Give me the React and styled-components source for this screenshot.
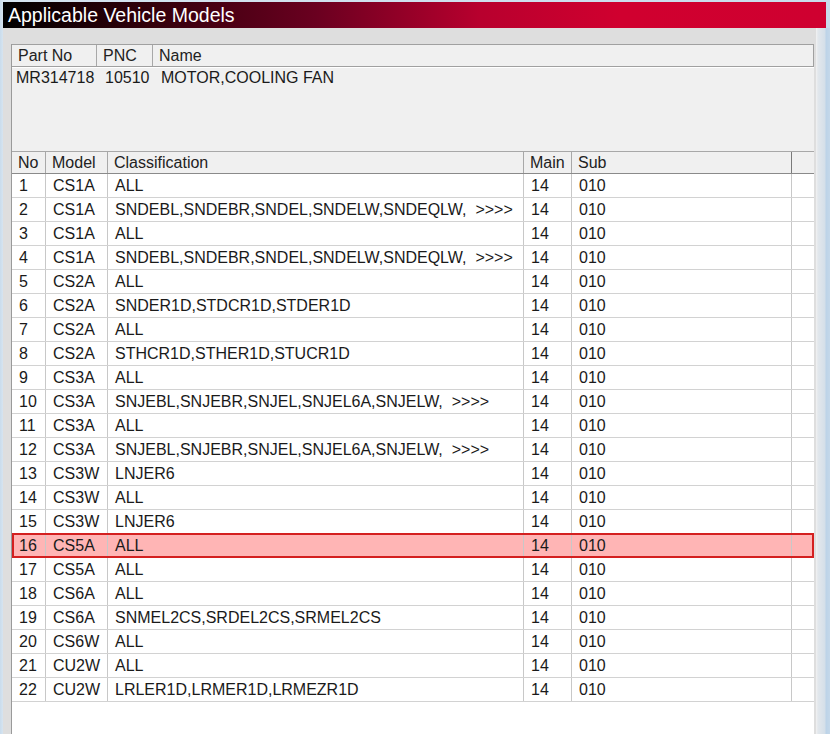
import React from "react";
import styled, { createGlobalStyle } from "styled-components";

const rows = [
  ["1", "CS1A", "ALL"],
  ["2", "CS1A", "SNDEBL,SNDEBR,SNDEL,SNDELW,SNDEQLW,  >>>>"],
  ["3", "CS1A", "ALL"],
  ["4", "CS1A", "SNDEBL,SNDEBR,SNDEL,SNDELW,SNDEQLW,  >>>>"],
  ["5", "CS2A", "ALL"],
  ["6", "CS2A", "SNDER1D,STDCR1D,STDER1D"],
  ["7", "CS2A", "ALL"],
  ["8", "CS2A", "STHCR1D,STHER1D,STUCR1D"],
  ["9", "CS3A", "ALL"],
  ["10", "CS3A", "SNJEBL,SNJEBR,SNJEL,SNJEL6A,SNJELW,  >>>>"],
  ["11", "CS3A", "ALL"],
  ["12", "CS3A", "SNJEBL,SNJEBR,SNJEL,SNJEL6A,SNJELW,  >>>>"],
  ["13", "CS3W", "LNJER6"],
  ["14", "CS3W", "ALL"],
  ["15", "CS3W", "LNJER6"],
  ["16", "CS5A", "ALL"],
  ["17", "CS5A", "ALL"],
  ["18", "CS6A", "ALL"],
  ["19", "CS6A", "SNMEL2CS,SRDEL2CS,SRMEL2CS"],
  ["20", "CS6W", "ALL"],
  ["21", "CU2W", "ALL"],
  ["22", "CU2W", "LRLER1D,LRMER1D,LRMEZR1D"],
];

const GlobalStyle = createGlobalStyle`
  html, body {
    margin: 0;
    padding: 0;
    background: #c4d8ea;
  }
  body {
    font-family: "Liberation Sans", Arial, sans-serif;
  }
`;

const Window = styled.div`
  width: 830px;
  height: 734px;
  display: flex;
  flex-direction: column;
  padding-top: 2px;
  box-sizing: border-box;
  background: linear-gradient(to right, #c9dcec 0, #d6e4f0 3px, #c9dcec 100%);
  overflow: hidden;
`;

const TitleBar = styled.div`
  height: 26px;
  margin: 0 4px 0 3px;
  padding-left: 5px;
  display: flex;
  align-items: center;
  color: #ffffff;
  font-size: 19.5px;
  background: linear-gradient(
    to right,
    #000000 0%,
    #2a0008 15%,
    #6a0020 38%,
    #b8002e 58%,
    #d0002f 75%,
    #cf0030 100%
  );
`;

const Body = styled.div`
  flex: 1;
  display: flex;
  min-height: 0;
`;

const Panel = styled.div`
  flex: 1;
  margin-left: 3px;
  padding: 16px 2px 0 8px;
  background: #dedede;
  display: flex;
  flex-direction: column;
  min-height: 0;
`;

const SideStrip = styled.div`
  width: 14px;
  background: linear-gradient(to right, #f2f2f2 0, #e2e7ec 2px, #d4dfe9 9px, #bcd3e8 10px, #c4d8ea 100%);
`;

const Content = styled.div`
  flex: 1;
  display: flex;
  flex-direction: column;
  border-left: 1px solid #9a9a9a;
  background: #f0f0f0;
  min-height: 0;
`;

const InfoBox = styled.div`
  height: 107px;
  display: flex;
  flex-direction: column;
  background: #f0f0f0;
`;

const InfoHeader = styled.div`
  display: grid;
  grid-template-columns: 85px 56px 1fr;
  height: 21px;
  border-top: 1px solid #a0a0a0;
  border-right: 1px solid #a0a0a0;
  border-bottom: 1px solid #a0a0a0;
  box-shadow: 0 1px 0 #ffffff;
`;

const InfoHeadCell = styled.div`
  display: flex;
  align-items: center;
  padding-left: 6px;
  font-size: 16px;
  color: #222;
  border-right: ${(p) => (p.$last ? "none" : "1px solid #a8a8a8")};
`;

const InfoRow = styled.div`
  display: grid;
  grid-template-columns: 85px 56px 1fr;
  height: 22px;
  align-items: center;
`;

const InfoCell = styled.div`
  padding-left: ${(p) => p.$pad}px;
  font-size: 16px;
  color: #1a1a1a;
  white-space: nowrap;
`;

const Grid = styled.div`
  flex: 1;
  display: flex;
  flex-direction: column;
  background: #ffffff;
  min-height: 0;
`;

const cols = "34px 62px 416px 48px 220px 1fr";

const HeadRow = styled.div`
  display: grid;
  grid-template-columns: ${cols};
  height: 21px;
  background: #f0f0f0;
  border-top: 1px solid #a8a8a8;
  border-bottom: 1px solid #8a8a8a;
  flex-shrink: 0;
`;

const HeadCell = styled.div`
  display: flex;
  align-items: center;
  padding-left: 6px;
  font-size: 16px;
  color: #222;
  border-right: 1px solid ${(p) => (p.$dark ? "#7a7a7a" : "#a8a8a8")};
  ${(p) => (p.$last ? "border-right: none;" : "")}
`;

const Row = styled.div`
  display: grid;
  grid-template-columns: ${cols};
  height: 24px;
  box-sizing: border-box;
  flex-shrink: 0;
  position: relative;
  background: ${(p) => (p.$selected ? "#ffb5b5" : "#ffffff")};
  border-bottom: 1px solid #d2d2d2;
`;

const SelectFrame = styled.div`
  position: absolute;
  left: 0;
  right: 0;
  top: -1px;
  bottom: -1px;
  border: 2px solid #d42020;
  pointer-events: none;
`;

const Cell = styled.div`
  display: flex;
  align-items: center;
  padding-left: 7px;
  font-size: 16px;
  color: #1a1a1a;
  white-space: pre;
  overflow: hidden;
  border-right: ${(p) => (p.$last ? "none" : "1px solid #c8c8c8")};
`;

const App = () => {
  return (
    <>
      <GlobalStyle />
      <Window>
        <TitleBar>Applicable Vehicle Models</TitleBar>
        <Body>
          <Panel>
            <Content>
              <InfoBox>
                <InfoHeader>
                  <InfoHeadCell>Part No</InfoHeadCell>
                  <InfoHeadCell>PNC</InfoHeadCell>
                  <InfoHeadCell $last>Name</InfoHeadCell>
                </InfoHeader>
                <InfoRow>
                  <InfoCell $pad={4}>MR314718</InfoCell>
                  <InfoCell $pad={8}>10510</InfoCell>
                  <InfoCell $pad={8}>MOTOR,COOLING FAN</InfoCell>
                </InfoRow>
              </InfoBox>
              <Grid>
                <HeadRow>
                  <HeadCell>No</HeadCell>
                  <HeadCell>Model</HeadCell>
                  <HeadCell>Classification</HeadCell>
                  <HeadCell>Main</HeadCell>
                  <HeadCell $dark>Sub</HeadCell>
                  <HeadCell $last />
                </HeadRow>
                {rows.map(([no, model, cls]) => {
                  const selected = no === "16";
                  return (
                    <Row key={no} $selected={selected}>
                      <Cell>{no}</Cell>
                      <Cell>{model}</Cell>
                      <Cell>{cls}</Cell>
                      <Cell>14</Cell>
                      <Cell>010</Cell>
                      <Cell $last />
                      {selected && <SelectFrame />}
                    </Row>
                  );
                })}
              </Grid>
            </Content>
          </Panel>
          <SideStrip />
        </Body>
      </Window>
    </>
  );
};

export default App;
